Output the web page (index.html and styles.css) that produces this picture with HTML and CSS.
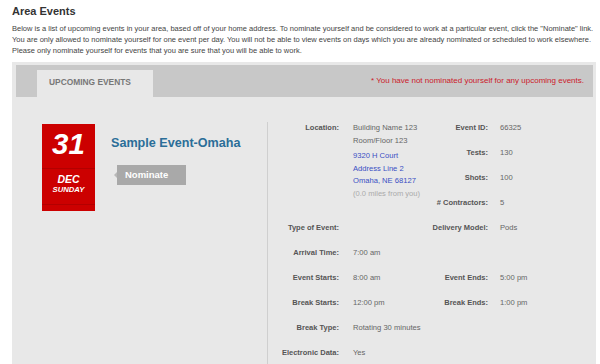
FILE: index.html
```html
<!DOCTYPE html>
<html>
<head>
<meta charset="utf-8">
<link rel="stylesheet" href="styles.css">
</head>
<body>
<div class="page">
  <h1 class="title">Area Events</h1>
  <p class="intro">Below is a list of upcoming events in your area, based off of your home address. To nominate yourself and be considered to work at a particular event, click the "Nominate" link.<br>You are only allowed to nominate yourself for one event per day. You will not be able to view events on days which you are already nominated or scheduled to work elsewhere.<br>Please only nominate yourself for events that you are sure that you will be able to work.</p>

  <div class="panel">
    <div class="tabbar">
      <div class="tab">UPCOMING EVENTS</div>
      <div class="notice">* You have not nominated yourself for any upcoming events.</div>
    </div>
    <div class="panel-body">
      <div class="event-main">
        <div class="datebox">
          <div class="date-day">31</div>
          <div class="date-mid">
            <div class="date-month">DEC</div>
            <div class="date-weekday">SUNDAY</div>
          </div>
          <div class="date-foot"></div>
        </div>
        <div class="event-head">
          <div class="event-name">Sample Event-Omaha</div>
          <a class="nominate">Nominate</a>
        </div>
      </div>
      <div class="details">
        <div class="lbl">Location:</div>
        <div class="val loc">
          <div>Building Name 123</div>
          <div>Room/Floor 123</div>
          <div class="addr">
            <div>9320 H Court</div>
            <div>Address Line 2</div>
            <div>Omaha, NE 68127</div>
          </div>
          <div class="miles">(0.0 miles from you)</div>
        </div>
        <div class="lbl">Event ID:</div>
        <div class="val val2">66325</div>

        <div></div>
        <div class="lbl">Tests:</div>
        <div class="val val2">130</div>

        <div></div>
        <div class="lbl">Shots:</div>
        <div class="val val2">100</div>

        <div></div>
        <div class="lbl"># Contractors:</div>
        <div class="val val2">5</div>

        <div class="lbl">Type of Event:</div>
        <div class="val"></div>
        <div class="lbl">Delivery Model:</div>
        <div class="val val2">Pods</div>

        <div class="lbl">Arrival Time:</div>
        <div class="val">7:00 am</div>
        <div></div>
        <div></div>

        <div class="lbl">Event Starts:</div>
        <div class="val">8:00 am</div>
        <div class="lbl">Event Ends:</div>
        <div class="val val2">5:00 pm</div>

        <div class="lbl">Break Starts:</div>
        <div class="val">12:00 pm</div>
        <div class="lbl">Break Ends:</div>
        <div class="val val2">1:00 pm</div>

        <div class="lbl">Break Type:</div>
        <div class="val">Rotating 30 minutes</div>
        <div></div>
        <div></div>

        <div class="lbl">Electronic Data:</div>
        <div class="val">Yes</div>
        <div></div>
        <div></div>
      </div>
    </div>
  </div>
</div>
</body>
</html>
```

FILE: styles.css
```css
* { box-sizing: border-box; }
html, body { margin: 0; padding: 0; background: #fff; }
body {
  font-family: "Liberation Sans", Arial, Helvetica, sans-serif;
  color: #444;
  overflow: hidden;
}
.page {
  padding: 4px 4px 0 12px;
}
.title {
  margin: 0;
  font-size: 11px;
  line-height: 14px;
  font-weight: bold;
  color: #333;
}
.intro {
  margin: 6px 0 0 0;
  font-size: 7.5px;
  line-height: 10.8px;
  color: #444;
  white-space: nowrap;
}
.panel {
  margin-top: 6px;
  width: 584px;
  background: #e8e8e8;
  padding: 3px 3px 0 4px;
  height: 310px;
}
.tabbar {
  background: #c8c8c8;
  height: 32px;
  display: flex;
  align-items: flex-end;
  justify-content: space-between;
  padding: 0 9px 0 21px;
}
.tab {
  background: #e8e8e8;
  height: 27px;
  width: 116px;
  padding-left: 12px;
  font-size: 8.4px;
  font-weight: bold;
  color: #777;
  line-height: 25px;
}
.notice {
  align-self: center;
  font-size: 8px;
  color: #cc1a2a;
  padding-bottom: 1px;
}
.panel-body {
  display: flex;
  padding-top: 25px;
}
.event-main {
  width: 251px;
  display: flex;
  align-items: flex-start;
  padding-left: 26px;
  padding-top: 2px;
}
.datebox {
  width: 53px;
  background: #cc0000;
  color: #fff;
  font-weight: bold;
  font-style: italic;
  text-align: center;
}
.date-day {
  height: 45px;
  font-size: 29.5px;
  line-height: 32px;
  padding-top: 4px;
  border-bottom: 1px solid #b30000;
}
.date-mid {
  height: 36px;
  padding-top: 4px;
  border-bottom: 1px solid #b30000;
}
.date-month {
  font-size: 10.5px;
  line-height: 12px;
}
.date-weekday {
  font-size: 7.7px;
  line-height: 10px;
}
.date-foot {
  height: 6px;
}
.event-head {
  padding-left: 16px;
  padding-top: 11px;
}
.event-name {
  font-size: 12.6px;
  line-height: 16px;
  font-weight: bold;
  color: #2b6e98;
  white-space: nowrap;
}
.nominate {
  position: relative;
  display: block;
  margin-top: 14px;
  margin-left: 6px;
  width: 69px;
  height: 20px;
  background: #a9a9a9;
  color: #fff;
  font-weight: bold;
  font-size: 9.5px;
  line-height: 19px;
  padding-left: 8px;
}
.nominate::before {
  content: "";
  position: absolute;
  left: -3px;
  top: 7px;
  border-top: 3px solid transparent;
  border-bottom: 3px solid transparent;
  border-right: 3px solid #b8b8b8;
}
.details {
  border-left: 1px solid #cfcfcf;
  display: grid;
  grid-template-columns: 71px 84px 65px 1fr;
  grid-auto-rows: 12.5px;
  row-gap: 12.5px;
  font-size: 7.6px;
  line-height: 12.5px;
  height: 260px;
  flex: 1;
}
.lbl {
  text-align: right;
  font-weight: bold;
  font-size: 7.5px;
  color: #555;
  white-space: nowrap;
}
.val {
  padding-left: 14px;
  color: #666;
  white-space: nowrap;
}
.val2 {
  padding-left: 12px;
}
.loc {
  grid-row: span 4;
}
.addr {
  margin-top: 3px;
  color: #3a4fc4;
}
.miles {
  color: #aaa;
}
```
